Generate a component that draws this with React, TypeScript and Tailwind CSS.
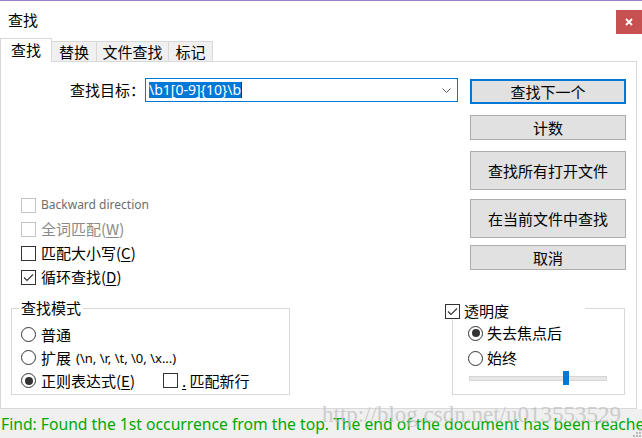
import React from 'react';

type BoxProps = { checked?: boolean; disabled?: boolean };

const CheckBox: React.FC<BoxProps> = ({ checked, disabled }) => (
  <span
    className={`flex h-[15px] w-[15px] shrink-0 items-center justify-center border bg-white ${
      disabled ? 'border-[#c4c4c4]' : 'border-[#333333]'
    }`}
  >
    {checked && (
      <svg width="11" height="9" viewBox="0 0 11 9">
        <path d="M1 4.5 L4 7.5 L10 1.5" fill="none" stroke="#333333" strokeWidth="1.1" />
      </svg>
    )}
  </span>
);

const Radio: React.FC<{ checked?: boolean }> = ({ checked }) => (
  <span className="flex h-[15px] w-[15px] shrink-0 items-center justify-center rounded-full border border-[#333333] bg-white">
    {checked && <span className="h-[8px] w-[8px] rounded-full bg-[#333333]" />}
  </span>
);

const Btn: React.FC<{ label: string; className: string; primary?: boolean }> = ({
  label,
  className,
  primary,
}) => (
  <div
    className={`flex w-[156px] items-center justify-center bg-[#e1e1e1] ${
      primary ? 'border-2 border-[#0078d7]' : 'border border-[#adadad]'
    } ${className}`}
  >
    {label}
  </div>
);

const Key: React.FC<{ k: string }> = ({ k }) => <span className="underline underline-offset-2">{k}</span>;

export default function App() {
  return (
    <div className="relative h-[438px] w-[642px] overflow-hidden border-t border-[#9b80c9] bg-white font-['Noto_Sans_CJK_SC',sans-serif] text-[15px] leading-[20px] text-black">
      {/* title bar */}
      <div className="flex h-[37px] items-start justify-between">
        <span className="ml-[8px] mt-[9px]">查找</span>
        <div className="mt-[9px] flex h-[24px] w-[26px] items-center justify-center bg-[#c75050]">
          <svg width="8" height="8" viewBox="0 0 8 8">
            <path d="M1 1 L7 7 M7 1 L1 7" stroke="white" strokeWidth="1.8" />
          </svg>
        </div>
      </div>

      {/* tabs */}
      <div className="flex h-[23px] items-end">
        <div className="relative z-10 -mb-px flex h-[24px] w-[52px] items-center justify-center border-x border-t border-[#d9d9d9] bg-white pb-[2px]">
          查找
        </div>
        <div className="flex h-[20px] w-[45px] items-center justify-center border-r border-t border-[#d9d9d9] bg-[#f0f0f0]">
          替换
        </div>
        <div className="flex h-[20px] w-[72px] items-center justify-center border-r border-t border-[#d9d9d9] bg-[#f0f0f0]">
          文件查找
        </div>
        <div className="flex h-[20px] w-[44px] items-center justify-center border-r border-t border-[#d9d9d9] bg-[#f0f0f0]">
          标记
        </div>
      </div>

      {/* panel */}
      <div className="flex h-[348px] w-[637px] flex-col border border-[#d9d9d9]">
        <div className="flex">
          <div className="w-[469px]">
            <div className="mt-[16px] flex h-[24px] items-center">
              <span className="w-[144px] text-right">查找目标：</span>
              <div className="flex h-[24px] w-[313px] items-center border border-[#0078d7] pl-[3px]">
                <span className="h-[16px] bg-[#0078d7] font-['Noto_Sans',sans-serif] text-[14px] leading-[16px] text-white">
                  {'\\b1[0-9]{10}\\b'}
                </span>
                <span className="h-[16px] w-px bg-[#333333]" />
                <span className="flex-1" />
                <svg width="9" height="5" viewBox="0 0 9 5" className="mr-[6px]">
                  <path d="M0.5 0.5 L4.5 4.5 L8.5 0.5" fill="none" stroke="#606060" strokeWidth="1" />
                </svg>
              </div>
            </div>

            <div className="mt-[91px] flex flex-col pl-[20px]">
              <div className="flex h-6 items-center gap-[5px]">
                <CheckBox disabled />
                <span className="font-['Noto_Sans',sans-serif] text-[12px] text-[#6d6d6d]">Backward direction</span>
              </div>
              <div className="flex h-6 items-center gap-[5px] text-[#8a8a8a]">
                <CheckBox disabled />
                <span>
                  全词匹配(<Key k="W" />)
                </span>
              </div>
              <div className="flex h-6 items-center gap-[5px]">
                <CheckBox />
                <span>
                  匹配大小写(<Key k="C" />)
                </span>
              </div>
              <div className="flex h-6 items-center gap-[5px]">
                <CheckBox checked />
                <span>
                  循环查找(<Key k="D" />)
                </span>
              </div>
            </div>
          </div>

          <div className="flex flex-col">
            <Btn primary label="查找下一个" className="mt-[17px] h-[25px]" />
            <Btn label="计数" className="mt-[11px] h-[25px]" />
            <Btn label="查找所有打开文件" className="mt-[11px] h-[39px]" />
            <Btn label="在当前文件中查找" className="mt-[9px] h-[39px]" />
            <Btn label="取消" className="mt-[7px] h-[25px]" />
          </div>
        </div>

        <div className="mt-[9px] flex items-start pl-[10px]">
          <fieldset className="h-[97px] w-[279px] border border-[#d9d9d9] px-[7px]">
            <legend className="px-[2px] leading-[20px]">查找模式</legend>
            <div className="mt-[5px] flex flex-col pl-[2px]">
              <div className="flex h-[23px] items-center gap-[5px]">
                <Radio />
                <span>普通</span>
              </div>
              <div className="flex h-[23px] items-center gap-[5px]">
                <Radio />
                <span>扩展</span>
                <span className="font-['Noto_Sans',sans-serif] text-[13px]">{'(\\n, \\r, \\t, \\0, \\x...)'}</span>
              </div>
              <div className="flex h-[23px] items-center">
                <div className="flex w-[142px] items-center gap-[5px]">
                  <Radio checked />
                  <span>
                    正则表达式(<Key k="E" />)
                  </span>
                </div>
                <div className="flex items-center gap-[4px]">
                  <CheckBox />
                  <span>
                    <Key k="." /> 匹配新行
                  </span>
                </div>
              </div>
            </div>
          </fieldset>

          <div className="relative ml-[162px] mt-[10px] h-[87px] w-[173px] border border-[#d9d9d9]">
            <div className="absolute left-[-8px] top-[-6px] flex h-[16px] w-[140px] items-center gap-[4px] bg-white">
              <CheckBox checked />
              <span>透明度</span>
            </div>
            <div className="flex flex-col pl-[15px] pt-[12px]">
              <div className="flex h-[24px] items-center gap-[4px]">
                <Radio checked />
                <span>失去焦点后</span>
              </div>
              <div className="mt-px flex h-[24px] items-center gap-[4px]">
                <Radio />
                <span>始终</span>
              </div>
              <div className="relative ml-[1px] mt-px h-[14px] w-[138px]">
                <div className="absolute left-0 top-[5px] h-[5px] w-[138px] border border-[#d6d6d6] bg-[#e7e7e7]" />
                <div className="absolute left-[94px] top-0 h-[14px] w-[6px] bg-[#0078d7]" />
              </div>
            </div>
          </div>
        </div>
      </div>

      {/* status bar */}
      <div className="h-[29px] overflow-hidden whitespace-nowrap bg-[#f0f0f0] pl-[1px] pt-[5px] font-['Noto_Sans',sans-serif] text-[15.7px] leading-[20px] text-[#00a800]">
        Find: Found the 1st occurrence from the top. The end of the document has been reached
      </div>

      <div className="pointer-events-none absolute left-[322px] top-[402px] font-['Liberation_Serif',serif] text-[23px] leading-[23px] text-[#bdbdbd] opacity-70">
        http://blog.csdn.net/u013553529
      </div>

      <svg className="absolute bottom-[1px] right-[1px]" width="9" height="9" viewBox="0 0 9 9">
        <rect x="7" y="1" width="2" height="2" fill="#b8b8b8" />
        <rect x="4" y="4" width="2" height="2" fill="#b8b8b8" />
        <rect x="7" y="4" width="2" height="2" fill="#b8b8b8" />
        <rect x="1" y="7" width="2" height="2" fill="#b8b8b8" />
        <rect x="4" y="7" width="2" height="2" fill="#b8b8b8" />
        <rect x="7" y="7" width="2" height="2" fill="#b8b8b8" />
      </svg>
    </div>
  );
}
